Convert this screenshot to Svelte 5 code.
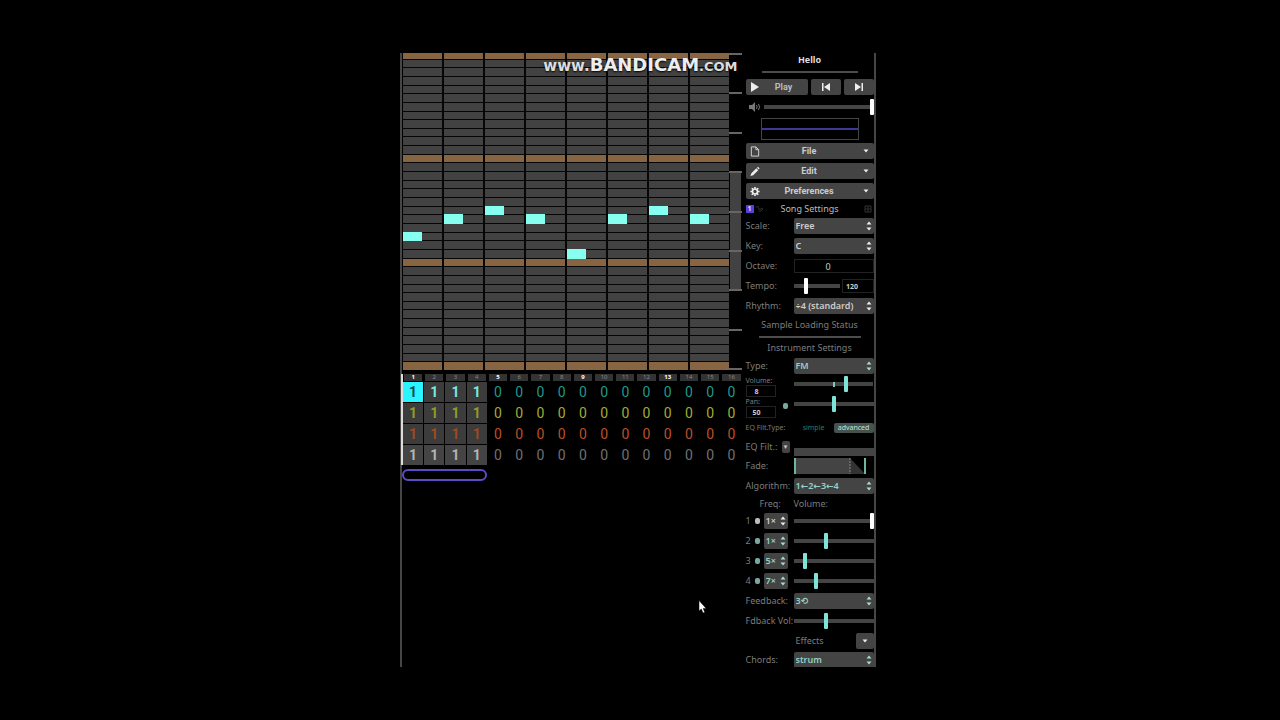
<script lang="ts">
  const pitchRows = Array.from({ length: 37 }, (_, i) => i)
  const beats = Array.from({ length: 8 }, (_, i) => i)
  const bars = Array.from({ length: 16 }, (_, i) => i + 1)
  const channels = ['pitch-one', 'pitch-two', 'pitch-three', 'noise']
  const octaveTicks = Array.from({ length: 9 }, (_, i) => i)

  const notes = [
    { row: 22, beat: 1 },
    { row: 20, beat: 2 },
    { row: 19, beat: 3 },
    { row: 20, beat: 4 },
    { row: 24, beat: 5 },
    { row: 20, beat: 6 },
    { row: 19, beat: 7 },
    { row: 20, beat: 8 },
  ]

  const operators = [
    { id: 1, freq: '1×', volume: 100 },
    { id: 2, freq: '1×', volume: 40 },
    { id: 3, freq: '5×', volume: 13 },
    { id: 4, freq: '7×', volume: 27 },
  ]
</script>

{#snippet arrows()}
  <svg class="arrows" viewBox="0 0 6 12" aria-hidden="true">
    <path d="M0.5 4.5 L3 1.5 L5.5 4.5 Z M0.5 7.5 L3 10.5 L5.5 7.5 Z" />
  </svg>
{/snippet}

{#snippet caret()}
  <svg class="caret" viewBox="0 0 6 4" aria-hidden="true"><path d="M0.5 0.5 H5.5 L3 3.5 Z" /></svg>
{/snippet}

{#snippet selectRow(id: string, label: string, value: string, tone: string)}
  <div class="row">
    <label for={id}>{label}</label>
    <div class="select {tone}">
      <select {id}><option>{value}</option></select>
      {@render arrows()}
    </div>
  </div>
{/snippet}

<main>
  <div class="frame">
    <section class="editor">
      <div class="pattern">
        <div class="roll">
          <div class="grid">
            {#each pitchRows as row}
              {#each beats as beat}
                <div class="cell" class:tonic={row % 12 === 0} style:grid-area="{row + 1} / {beat + 1}"></div>
              {/each}
            {/each}
            {#each notes as note}
              <div class="note" style:grid-area="{note.row} / {note.beat}"></div>
            {/each}
          </div>
        </div>
        <div class="octaves">
          {#each octaveTicks as tick}
            <div class="octave" class:visible={tick >= 3 && tick < 6}></div>
          {/each}
        </div>
        <div class="watermark">www.<b>BANDICAM</b><small>.COM</small></div>
      </div>

      <div class="track">
        <div class="bars numbers">
          {#each bars as bar}
            <div class="bar" class:strong={bar % 4 === 1}>{bar}</div>
          {/each}
        </div>
        {#each channels as channel, c}
          <div class="bars {channel}">
            {#each bars as bar}
              <button class="box" class:used={bar <= 4} class:selected={bar === 1 && c === 0}>{bar <= 4 ? 1 : 0}</button>
            {/each}
          </div>
        {/each}
      </div>
      <div class="loop"></div>
    </section>

    <aside class="settings">
      <h1>Hello</h1>
      <div class="divider title-divider"></div>
      <div class="row player">
        <button class="play">
          <svg viewBox="0 0 10 10" aria-hidden="true"><path d="M1 0 L9 5 L1 10 Z" /></svg>
          <span>Play</span>
        </button>
        <button aria-label="Previous bar">
          <svg viewBox="0 0 10 10" aria-hidden="true"><path d="M1 1 H2.5 V9 H1 Z M9 1 V9 L3 5 Z" /></svg>
        </button>
        <button aria-label="Next bar">
          <svg viewBox="0 0 10 10" aria-hidden="true"><path d="M7.5 1 H9 V9 H7.5 Z M1 1 V9 L7 5 Z" /></svg>
        </button>
      </div>
      <div class="row master">
        <svg class="speaker" viewBox="0 0 12 10" aria-hidden="true">
          <path d="M0 3 H3 L6 0 V10 L3 7 H0 Z" />
          <path class="wave" d="M7.5 3 Q8.7 5 7.5 7 M9.5 2 Q11.5 5 9.5 8" />
        </svg>
        <input type="range" class="white" value="100" aria-label="Song volume" />
      </div>
      <div class="scope"><div class="wave-line"></div></div>

      <div class="row">
        <button class="menu">
          <svg viewBox="0 0 10 12" aria-hidden="true"><path class="line" d="M1 1 H6 L9 4 V11 H1 Z M6 1 V4 H9" /></svg>
          <span>File</span>{@render caret()}
        </button>
      </div>
      <div class="row">
        <button class="menu">
          <svg viewBox="0 0 10 12" aria-hidden="true"><path d="M0 11 L1 8 L6.5 2.5 L8.5 4.5 L3 10 Z M7.2 1.8 L8.3 0.7 L10 2.6 L9 3.8 Z" /></svg>
          <span>Edit</span>{@render caret()}
        </button>
      </div>
      <div class="row">
        <button class="menu">
          <svg viewBox="0 0 12 12" aria-hidden="true">
            <circle class="gear" cx="6" cy="6" r="3" />
            <path class="teeth" d="M6 0.5 V2.5 M6 9.5 V11.5 M0.5 6 H2.5 M9.5 6 H11.5 M2.1 2.1 L3.5 3.5 M8.5 8.5 L9.9 9.9 M9.9 2.1 L8.5 3.5 M3.5 8.5 L2.1 9.9" />
          </svg>
          <span>Preferences</span>{@render caret()}
        </button>
      </div>

      <div class="song-head">
        <div class="tabs">
          <span class="tab">1</span>
          <svg viewBox="0 0 8 8" aria-hidden="true"><path d="M0 2 H3 M2 4 H5 M5 3 L7 4 L5 6 M3 6 H5" /></svg>
        </div>
        <h2>Song Settings</h2>
        <svg viewBox="0 0 8 8" aria-hidden="true"><path d="M1 1 H7 V7 H1 Z M4 1 V7 M1 4 H7" /></svg>
      </div>
      {@render selectRow('scale', 'Scale:', 'Free', 'plain')}
      {@render selectRow('key', 'Key:', 'C', 'plain')}
      <div class="row">
        <label for="octave">Octave:</label>
        <input id="octave" class="number" value="0" />
      </div>
      <div class="row">
        <label for="tempo">Tempo:</label>
        <div class="tempo">
          <input id="tempo" type="range" class="white" value="24" />
          <input class="number" value="120" aria-label="Beats per minute" />
        </div>
      </div>
      {@render selectRow('rhythm', 'Rhythm:', '÷4 (standard)', 'plain')}
      <h3>Sample Loading Status</h3>
      <div class="divider"></div>
      <h2 class="instrument">Instrument Settings</h2>
      {@render selectRow('type', 'Type:', 'FM', 'tinted')}

      <div class="levels">
        <div class="fields">
          <label for="volume">Volume:</label>
          <input id="volume" class="number" value="8" />
          <label for="pan">Pan:</label>
          <input id="pan" class="number" value="50" />
        </div>
        <button class="dot" aria-label="Pan options"></button>
        <div class="sliders">
          <div class="notched"><input type="range" value="66" aria-label="Volume slider" /></div>
          <input type="range" value="50" aria-label="Pan slider" />
        </div>
      </div>

      <div class="row filter-type">
        <span>EQ Filt.Type:</span>
        <div class="switch">
          <button>simple</button>
          <button class="on">advanced</button>
        </div>
      </div>
      <div class="row filter">
        <span class="with-more">EQ Filt.: <button aria-label="EQ options">▾</button></span>
        <div class="filter-bar"></div>
      </div>
      <div class="row">
        <span>Fade:</span>
        <svg class="fade" viewBox="0 0 80 16" preserveAspectRatio="none" aria-hidden="true">
          <path class="fade-body" d="M0 0 H56 V16 H0 Z" />
          <path class="fade-tail" d="M56 0 L71 16 H56 Z" />
          <path class="fade-dash" d="M56 0 V16" />
          <path class="fade-edge" d="M1 0 V16 M71 0 V16" />
        </svg>
      </div>
      {@render selectRow('algorithm', 'Algorithm:', '1←2←3←4', 'tinted')}
      <div class="op-head"><span>Freq:</span><span>Volume:</span></div>
      {#each operators as op}
        <div class="row">
          <div class="op">
            <span>{op.id}</span>
            <button class="dot" class:pale={op.id === 1} aria-label="Operator {op.id} options"></button>
            <div class="select {op.id === 1 ? 'plain' : 'tinted'}">
              <select aria-label="Operator {op.id} frequency"><option>{op.freq}</option></select>
              {@render arrows()}
            </div>
          </div>
          <input type="range" class:white={op.id === 1} value={op.volume} aria-label="Operator {op.id} volume" />
        </div>
      {/each}
      {@render selectRow('feedback', 'Feedback:', '3⟲', 'tinted')}
      <div class="row">
        <label for="feedback-volume">Fdback Vol:</label>
        <input id="feedback-volume" type="range" value="40" />
      </div>
      <div class="row">
        <span></span>
        <div class="effects">
          <span>Effects</span>
          <button aria-label="Choose effects">{@render caret()}</button>
        </div>
      </div>
      <div class="last">{@render selectRow('chords', 'Chords:', 'strum', 'tinted')}</div>
    </aside>

    <svg class="pointer" viewBox="0 0 9 14" aria-hidden="true">
      <path d="M1 0.5 V11 L3.3 9 L5 13 L6.8 12.2 L5.2 8.4 H8.2 Z" />
    </svg>
  </div>
</main>

<style>
  :global(body) {
    background: #000;
  }

  main {
    box-sizing: border-box;
    min-height: 100vh;
    padding: 0 31.6% 0 31.25%;
    display: flex;
    align-items: center;
    font-family: "Noto Sans", "DejaVu Sans", sans-serif;
    font-size: 9px;
    line-height: 12px;
    color: #7c7c7c;
  }

  .frame {
    box-sizing: border-box;
    position: relative;
    flex: 1;
    display: flex;
    gap: 4px;
    border: solid #464646;
    border-width: 0 2px;
  }

  button, input, select {
    box-sizing: border-box;
    margin: 0;
    padding: 0;
    border: none;
    border-radius: 2px;
    background: none;
    color: inherit;
    font: inherit;
    min-width: 0;
  }

  h1, h2, h3 {
    margin: 0;
    font-size: 9px;
    font-weight: 400;
    text-align: center;
  }

  .editor {
    flex: 1;
    min-width: 0;
  }

  .pattern {
    position: relative;
    display: flex;
    padding-left: 1px;
  }

  .roll {
    flex: 1;
    height: 317px;
    overflow: hidden;
    display: flex;
    align-items: flex-end;
  }

  .grid {
    flex: 1;
    flex-shrink: 0;
    height: 319px;
    display: grid;
    grid-template: repeat(37, 1fr) / repeat(8, 1fr);
    gap: 1px 2px;
    background: #060606;
  }

  .cell {
    background: #424242;
  }

  .cell.tonic {
    background: #886542;
  }

  .note {
    width: 50%;
    margin: -1px 0;
    background: #86fff0;
  }

  .octaves {
    width: 13px;
    height: 317px;
    display: flex;
    flex-direction: column;
  }

  .octave {
    flex: 1;
    border-top: 2px solid #6a6560;
    background: #000;
  }

  .octave:last-child {
    flex: none;
  }

  .octave.visible {
    background: #424242;
    background-clip: content-box;
    padding: 0 1px;
  }

  .watermark {
    position: absolute;
    top: 2px;
    right: 4px;
    font-family: "DejaVu Sans", sans-serif;
    font-size: 15px;
    font-weight: 700;
    line-height: 20px;
    color: #ddd;
    text-shadow: 0 1px 2px #000;
  }

  .watermark b {
    font-size: 18px;
    color: #eee;
  }

  .watermark small {
    font-size: 13px;
  }

  .track {
    margin-top: 4px;
    border-left: 2px solid #ddd;
    display: flex;
    flex-direction: column;
    gap: 1px;
    margin-left: -1px;
  }

  .bars {
    display: grid;
    grid-template-columns: repeat(16, 1fr);
    gap: 1px;
  }

  .bar {
    height: 7px;
    overflow: hidden;
    margin: 0 1px;
    background: #333;
    color: #888;
    font-size: 6px;
    line-height: 7px;
    text-align: center;
  }

  .bar.strong {
    color: #fff;
    font-weight: 700;
  }

  .box {
    height: 20px;
    border-radius: 0;
    font-family: Roboto, sans-serif;
    font-size: 14px;
    line-height: 20px;
  }

  .used {
    background: #3c3c3c;
    font-weight: 700;
  }

  .pitch-one { color: #23958a; }
  .pitch-one .used { color: #7be8e0; }
  .pitch-two { color: #a2ab35; }
  .pitch-two .used { color: #929c22; }
  .pitch-three { color: #bd4f2a; }
  .pitch-three .used { color: #9c4c22; }
  .noise { color: #707070; }
  .noise .used { color: #b4b4b4; background: #444; }

  .box.selected {
    background: #2af4ff;
    color: #124a52;
  }

  .loop {
    box-sizing: border-box;
    width: 25%;
    height: 12px;
    margin-top: 4px;
    border: 2px solid #5d4bc4;
    border-radius: 6px;
  }

  .settings {
    width: 128px;
  }

  h1 {
    height: 14px;
    line-height: 14px;
    font-weight: 700;
    color: #ddd;
  }

  .divider {
    height: 2px;
    margin: 2px 13px;
    background: #4c4c4c;
  }

  .title-divider {
    margin: 4px 16px;
  }

  .row {
    height: 20px;
    display: grid;
    grid-template-columns: 48px 1fr;
    align-items: center;
    white-space: nowrap;
  }

  .row.player {
    grid-template-columns: 62px 30px 30px;
    gap: 3px;
  }

  .player button {
    height: 16px;
    background: #444;
    display: flex;
    align-items: center;
    justify-content: center;
    color: #bbb;
    font-family: Roboto, sans-serif;
    font-weight: 700;
  }

  .player svg {
    width: 10px;
    height: 10px;
    fill: #eee;
  }

  .player .play {
    padding-left: 4px;
    justify-content: flex-start;
  }

  .play span {
    flex: 1;
  }

  .row.master {
    grid-template-columns: 18px 1fr;
  }

  .speaker {
    width: 12px;
    height: 10px;
    margin-left: 3px;
    fill: #777;
  }

  .speaker .wave {
    fill: none;
    stroke: #777;
  }

  .scope {
    box-sizing: border-box;
    height: 22px;
    margin: 1px 15px;
    border: 1px solid #444;
    display: flex;
    align-items: center;
  }

  .wave-line {
    flex: 1;
    height: 2px;
    background: #3d3995;
  }

  .menu {
    grid-column: 1 / -1;
    height: 16px;
    padding: 0 5px 0 4px;
    background: #444;
    color: #ccc;
    font-family: Roboto, sans-serif;
    font-weight: 700;
    display: grid;
    grid-template-columns: 12px 1fr 12px;
    align-items: center;
  }

  .menu > svg:first-child {
    width: 10px;
    height: 11px;
    fill: #eee;
  }

  .menu .line {
    fill: none;
    stroke: #ddd;
  }

  .menu .gear {
    fill: none;
    stroke: #eee;
    stroke-width: 2;
  }

  .menu .teeth {
    stroke: #eee;
    stroke-width: 2;
  }

  .caret {
    width: 6px;
    height: 4px;
    justify-self: end;
    fill: #eee;
  }

  .song-head {
    height: 15px;
    display: grid;
    grid-template-columns: 20px 1fr 12px;
    align-items: center;
  }

  .song-head h2 {
    color: #bbb;
    padding-right: 8px;
  }

  .song-head svg {
    width: 8px;
    height: 8px;
    fill: none;
    stroke: #333;
  }

  .song-head > svg {
    justify-self: center;
  }

  .tabs {
    display: flex;
    align-items: center;
    gap: 2px;
  }

  .tab {
    width: 8px;
    height: 8px;
    background: #5640e0;
    color: #ddd;
    font-size: 7px;
    font-weight: 700;
    line-height: 8px;
    text-align: center;
  }

  .select {
    position: relative;
    height: 16px;
    display: flex;
    border-radius: 2px;
    background: #444;
    color: #ccc;
    font-weight: 600;
  }

  .select select {
    flex: 1;
    appearance: none;
    padding: 0 10px 0 2px;
  }

  .arrows {
    position: absolute;
    right: 2px;
    top: 2px;
    width: 6px;
    height: 12px;
    fill: #eee;
    pointer-events: none;
  }

  .tinted {
    color: #95d0c6;
  }

  .tinted .arrows {
    fill: #a5ddd2;
  }

  .number {
    width: 100%;
    height: 14px;
    border: 1px solid #222;
    border-radius: 0;
    color: #ccc;
    text-align: center;
  }

  .row .number {
    padding-right: 11px;
  }

  .tempo {
    display: grid;
    grid-template-columns: 46px 1fr;
    gap: 2px;
    align-items: center;
  }

  .tempo .number {
    font-size: 7px;
    font-weight: 700;
  }

  input[type="range"] {
    appearance: none;
    width: 100%;
    height: 16px;
    background: linear-gradient(#444, #444) center / 100% 4px no-repeat;
  }

  input[type="range"]::-webkit-slider-thumb {
    appearance: none;
    width: 4px;
    height: 16px;
    border-radius: 1px;
    background: #7ee3d8;
  }

  input[type="range"].white::-webkit-slider-thumb {
    background: #fff;
  }

  h3 {
    height: 18px;
    line-height: 18px;
  }

  .instrument {
    height: 16px;
    line-height: 16px;
  }

  .levels {
    height: 42px;
    display: grid;
    grid-template-columns: 32px 16px 1fr;
  }

  .fields {
    display: flex;
    flex-direction: column;
    font-size: 7px;
    line-height: 9px;
  }

  .fields .number {
    width: 30px;
    height: 12px;
    padding-right: 8px;
    font-weight: 700;
  }

  .dot {
    width: 5px;
    height: 6px;
    border-radius: 2px;
    background: #79a8a0;
  }

  .dot.pale {
    background: #bbb;
  }

  .levels .dot {
    align-self: end;
    justify-self: center;
    margin-bottom: 9px;
  }

  .sliders {
    display: grid;
    align-content: start;
    gap: 4px;
  }

  .notched {
    display: flex;
    background: linear-gradient(#7ec8be, #7ec8be) center / 2px 5px no-repeat;
  }

  .notched input[type="range"] {
    background: linear-gradient(#444, #444) left / 49% 4px no-repeat, linear-gradient(#444, #444) right / 48% 4px no-repeat;
  }

  .filter-type, .filter-type button {
    font-size: 7px;
  }

  .switch {
    display: grid;
    grid-template-columns: 1fr 1fr;
  }

  .switch button {
    height: 10px;
    line-height: 10px;
    color: #1f8069;
  }

  .switch .on {
    background: #46524f;
    color: #bfe5dd;
  }

  .row.filter {
    height: 18px;
  }

  .with-more {
    display: flex;
    align-items: center;
    justify-content: space-between;
    padding-right: 4px;
  }

  .with-more button {
    width: 8px;
    height: 12px;
    background: #444;
    color: #ccc;
    font-size: 7px;
  }

  .filter-bar {
    height: 8px;
    align-self: end;
    background: #444;
  }

  .fade {
    width: 100%;
    height: 16px;
  }

  .fade-body { fill: #444; }
  .fade-tail { fill: #333; }

  .fade-dash {
    stroke: #888;
    stroke-dasharray: 2 1;
  }

  .fade-edge {
    stroke: #6fb5a6;
    stroke-width: 2;
  }

  .op-head {
    height: 15px;
    display: grid;
    grid-template-columns: 34px 1fr;
    padding-left: 14px;
    align-items: center;
  }

  .op {
    display: grid;
    grid-template-columns: 7px 5px 26px;
    gap: 2px;
    align-items: center;
  }

  .op .select {
    margin-left: 2px;
  }

  .op .select select {
    padding: 0 0 0 2px;
  }

  .effects {
    display: flex;
    align-items: center;
    justify-content: space-between;
    padding-left: 2px;
  }

  .effects button {
    width: 18px;
    height: 16px;
    background: #444;
    display: flex;
    align-items: center;
    justify-content: center;
  }

  .last {
    height: 16px;
    overflow: hidden;
  }

  .last .row {
    height: 18px;
  }

  .pointer {
    position: absolute;
    left: 296px;
    top: 547px;
    width: 9px;
    height: 14px;
    fill: #fff;
    stroke: #000;
    stroke-width: 0.5;
  }
</style>
